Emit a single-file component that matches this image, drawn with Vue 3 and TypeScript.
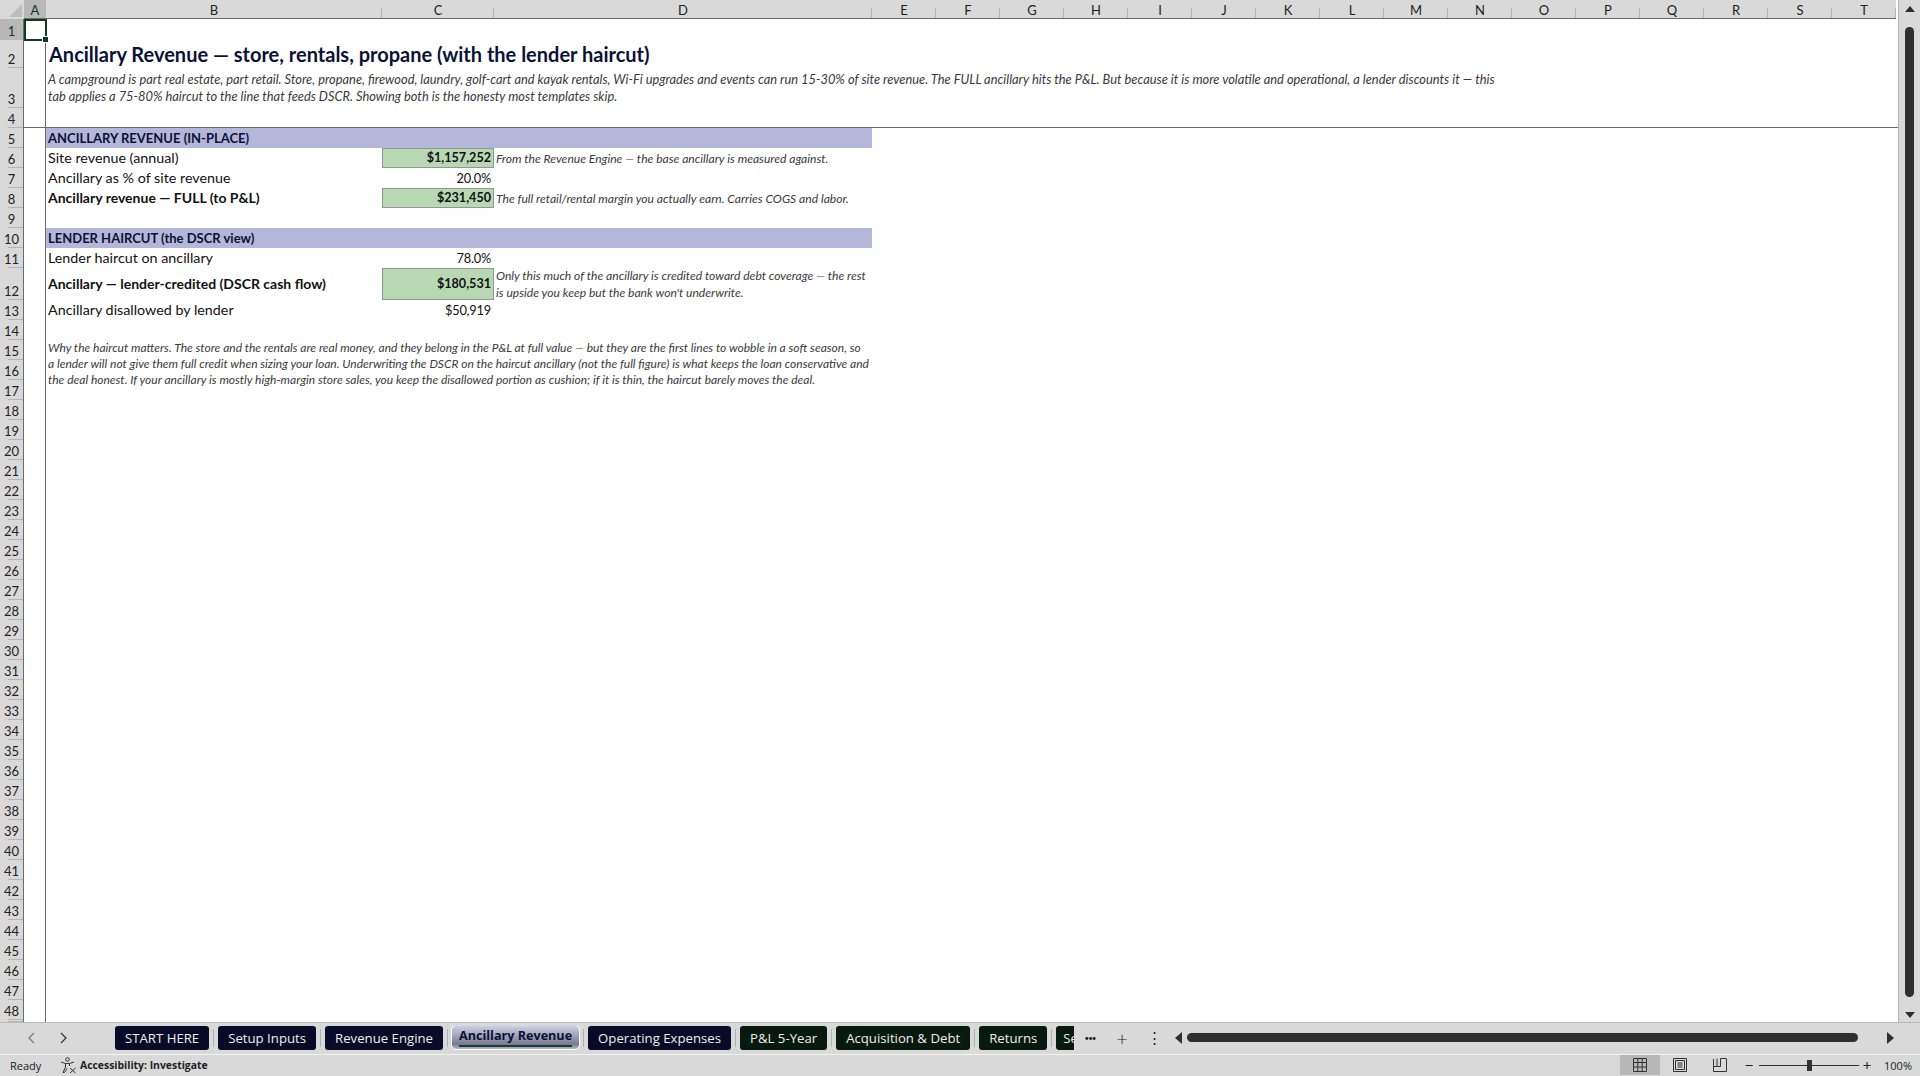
<template>
  <div class="app">
    <div class="main">
      <div class="sheet">
        <div class="corner">
          <svg width="14" height="14" viewBox="0 0 14 14"><polygon points="14,1 14,14 1,14" fill="#bdbdbd" /></svg>
        </div>
        <div
          v-for="(col, i) in columns"
          :key="col"
          class="col-head"
          :class="{ active: col === 'A' }"
          :style="{ gridColumn: i + 2 }"
        >{{ col }}</div>
        <div
          v-for="n in 48"
          :key="n"
          class="row-head"
          :class="{ active: n === 1 }"
          :style="{ gridRow: n + 1 }"
        >{{ n }}</div>
        <div class="row-head filler"></div>
        <div class="col-a-line"></div>
        <div class="freeze-line"></div>
        <div class="selected"><span class="handle"></span></div>

        <div class="title">Ancillary Revenue — store, rentals, propane (with the lender haircut)</div>
        <div class="subtitle">
          A campground is part real estate, part retail. Store, propane, firewood, laundry, golf-cart and kayak rentals, Wi-Fi upgrades and events can run 15-30% of site revenue. The FULL ancillary hits the P&amp;L. But because it is more volatile and operational, a lender discounts it — this<br />
          tab applies a 75-80% haircut to the line that feeds DSCR. Showing both is the honesty most templates skip.
        </div>

        <template v-for="line in lines" :key="line.row">
          <div v-if="line.section" class="section" :style="{ gridRow: line.row + 1 }">{{ line.section }}</div>
          <template v-else>
            <div class="label" :class="{ bold: line.bold }" :style="{ gridRow: line.row + 1 }">{{ line.label }}</div>
            <div class="value" :class="{ green: line.green }" :style="{ gridRow: line.row + 1 }">{{ line.value }}</div>
            <div v-if="line.note" class="note" :style="{ gridRow: line.row + 1 }" v-html="line.note"></div>
          </template>
        </template>

        <div class="why">
          Why the haircut matters. The store and the rentals are real money, and they belong in the P&amp;L at full value — but they are the first lines to wobble in a soft season, so<br />
          a lender will not give them full credit when sizing your loan. Underwriting the DSCR on the haircut ancillary (not the full figure) is what keeps the loan conservative and<br />
          the deal honest. If your ancillary is mostly high-margin store sales, you keep the disallowed portion as cushion; if it is thin, the haircut barely moves the deal.
        </div>
      </div>

      <div class="vscroll">
        <svg width="10" height="6" viewBox="0 0 10 6"><polygon points="5,0 10,6 0,6" fill="#2f2f2f" /></svg>
        <div class="vthumb"></div>
        <svg width="10" height="6" viewBox="0 0 10 6"><polygon points="0,0 10,0 5,6" fill="#2f2f2f" /></svg>
      </div>
    </div>

    <div class="tabbar">
      <div class="nav">
        <svg width="8" height="12" viewBox="0 0 8 12"><polyline points="7,1 2,6 7,11" fill="none" stroke="#7a7a7a" stroke-width="1.2" /></svg>
        <svg width="8" height="12" viewBox="0 0 8 12"><polyline points="1,1 6,6 1,11" fill="none" stroke="#333" stroke-width="1.2" /></svg>
      </div>
      <div class="tabs">
        <template v-for="(tab, i) in tabs" :key="tab.name">
          <span v-if="i > 0" class="sep"></span>
          <div class="tab" :class="tab.kind">{{ tab.name }}</div>
        </template>
      </div>
      <div class="more">•••</div>
      <div class="plus">+</div>
      <div class="dots">⋮</div>
      <div class="hscroll">
        <svg width="7" height="12" viewBox="0 0 7 12"><polygon points="7,0 7,12 0,6" fill="#2f2f2f" /></svg>
        <div class="hthumb"></div>
        <svg width="7" height="12" viewBox="0 0 7 12"><polygon points="0,0 7,6 0,12" fill="#2f2f2f" /></svg>
      </div>
    </div>

    <div class="status">
      <span class="ready">Ready</span>
      <svg class="a11y" width="17" height="17" viewBox="0 0 17 17" fill="none" stroke="#333" stroke-width="1">
        <circle cx="7.5" cy="2.5" r="1.8" />
        <path d="M1 5 L5.5 6.5 H9.5 L14 5 M5.5 6.5 V10 L3 15.5 H4.5 L7 11.5 M9.5 6.5 V9" />
        <path d="M10 11 L15.5 16 M15.5 11 L10 16" />
      </svg>
      <span class="a11y-text">Accessibility: Investigate</span>
      <div class="views">
        <div class="view on">
          <svg width="14" height="14" viewBox="0 0 14 14" fill="none" stroke="#333"><path d="M.5 .5H13.5V13.5H.5ZM.5 4.5H13.5M.5 9H13.5M4.8 .5V13.5M9.2 .5V13.5" /></svg>
        </div>
        <div class="view">
          <svg width="14" height="14" viewBox="0 0 14 14" fill="none" stroke="#333"><path d="M.5 .5H13.5V13.5H.5ZM2.5 2.5H11.5V11.5H2.5ZM4.5 5H9.5M4.5 7H9.5M4.5 9H9.5" /></svg>
        </div>
        <div class="view">
          <svg width="14" height="14" viewBox="0 0 14 14" fill="none" stroke="#333"><path d="M.5 1V13.5H13.5V1M.5 8.5H7.5V.5M7.5 .5H13.5M4 .5V8.5" /></svg>
        </div>
      </div>
      <div class="zoom">
        <span class="zoom-btn minus">−</span>
        <div class="slider"><span class="knob"></span></div>
        <span class="zoom-btn plus-btn">+</span>
      </div>
      <span class="pct">100%</span>
    </div>
  </div>
</template>

<script setup lang="ts">
interface SheetLine {
  row: number
  section?: string
  label?: string
  value?: string
  note?: string
  bold?: boolean
  green?: boolean
}

const columns = 'ABCDEFGHIJKLMNOPQRST'.split('')

const lines: SheetLine[] = [
  { row: 5, section: 'ANCILLARY REVENUE (IN-PLACE)' },
  {
    row: 6,
    label: 'Site revenue (annual)',
    value: '$1,157,252',
    green: true,
    note: 'From the Revenue Engine — the base ancillary is measured against.'
  },
  { row: 7, label: 'Ancillary as % of site revenue', value: '20.0%' },
  {
    row: 8,
    label: 'Ancillary revenue — FULL (to P&L)',
    value: '$231,450',
    bold: true,
    green: true,
    note: 'The full retail/rental margin you actually earn. Carries COGS and labor.'
  },
  { row: 10, section: 'LENDER HAIRCUT (the DSCR view)' },
  { row: 11, label: 'Lender haircut on ancillary', value: '78.0%' },
  {
    row: 12,
    label: 'Ancillary — lender-credited (DSCR cash flow)',
    value: '$180,531',
    bold: true,
    green: true,
    note: "Only this much of the ancillary is credited toward debt coverage — the rest<br>is upside you keep but the bank won't underwrite."
  },
  { row: 13, label: 'Ancillary disallowed by lender', value: '$50,919' }
]

const tabs = [
  { name: 'START HERE', kind: 'navy' },
  { name: 'Setup Inputs', kind: 'navy' },
  { name: 'Revenue Engine', kind: 'navy' },
  { name: 'Ancillary Revenue', kind: 'current' },
  { name: 'Operating Expenses', kind: 'navy' },
  { name: 'P&L 5-Year', kind: 'forest' },
  { name: 'Acquisition & Debt', kind: 'forest' },
  { name: 'Returns', kind: 'forest' },
  { name: 'Se', kind: 'forest cut' }
]
</script>

<style>
html,
body {
  margin: 0;
  background: #d9d9d9;
  overflow: hidden;
}
</style>

<style scoped>
.app {
  width: 1920px;
  height: 1076px;
  display: flex;
  flex-direction: column;
  background: #d9d9d9;
  font-family: Lato, "Open Sans", sans-serif;
  color: #111;
}

.main {
  display: flex;
  height: 1022px;
}

.sheet {
  width: 1898px;
  display: grid;
  grid-template-columns: 24px 22px 336px 112px 378px repeat(16, 64px) 2px;
  grid-template-rows: 19px 21px 28px 40px 20px repeat(7, 20px) 32px repeat(36, 20px) 2px;
  background: #fff;
  border-right: 1px solid #b5b5b5;
  overflow: hidden;
}

.corner {
  grid-row: 1;
  grid-column: 1;
  background: #d9d9d9;
  display: flex;
  align-items: flex-end;
  justify-content: flex-end;
  padding: 0 2px 2px 0;
  box-sizing: border-box;
}

.col-head {
  grid-row: 1;
  background: #d9d9d9 linear-gradient(#b5b5b5, #b5b5b5) right bottom / 1px 10px no-repeat;
  border-bottom: 1px solid #6b6b6b;
  box-sizing: border-box;
  text-align: center;
  font-size: 13px;
  line-height: 20px;
  color: #222;
}

.col-head.active {
  background: #b8b8b8;
  color: #0f3d20;
}

.row-head {
  grid-column: 1;
  background: #d9d9d9 linear-gradient(#b5b5b5, #b5b5b5) right bottom / 15px 1px no-repeat;
  border-right: 1px solid #6b6b6b;
  box-sizing: border-box;
  display: flex;
  align-items: flex-end;
  justify-content: center;
  font-size: 13px;
  line-height: 18px;
  color: #222;
}

.row-head.active {
  background: #b8b8b8;
  color: #0f3d20;
}

.row-head.filler {
  grid-row: 50;
}

.col-a-line {
  grid-row: 2 / -1;
  grid-column: 2;
  border-right: 1px solid #6b6b6b;
}

.freeze-line {
  grid-row: 5;
  grid-column: 2 / -1;
  border-bottom: 1px solid #6b6b6b;
}

.selected {
  grid-row: 2;
  grid-column: 2;
  position: relative;
  border: 2px solid #0f3d20;
  margin: 0 -1px -1px 0;
}

.handle {
  position: absolute;
  right: -4px;
  bottom: -4px;
  width: 5px;
  height: 5px;
  background: #0f3d20;
  border: 1px solid #fff;
}

.title {
  grid-row: 3;
  grid-column: 3 / -1;
  align-self: center;
  padding-left: 3px;
  font-size: 20px;
  font-weight: 700;
  color: #0b1136;
  white-space: nowrap;
}

.subtitle {
  grid-row: 4;
  grid-column: 3 / -1;
  padding: 3px 0 0 2px;
  font-size: 12.85px;
  font-style: italic;
  line-height: 17px;
  color: #3a3a3a;
  white-space: nowrap;
}

.section {
  grid-column: 3 / 6;
  background: #b4b7d9;
  padding-left: 2px;
  font-size: 13px;
  font-weight: 700;
  line-height: 20px;
  color: #0b1136;
}

.label {
  grid-column: 3;
  align-self: center;
  padding: 0 0 1px 2px;
  font-size: 14.3px;
  white-space: nowrap;
}

.value {
  grid-column: 4;
  display: flex;
  align-items: center;
  justify-content: flex-end;
  padding: 0 3px 1px 0;
  box-sizing: border-box;
  font-size: 12.8px;
  letter-spacing: -0.2px;
}

.label.bold {
  font-size: 14px;
  font-weight: 700;
}

.value.green {
  background: #b8d8b4;
  border: 1px solid #8e9a8e;
  padding-right: 2px;
  font-size: 12.6px;
  font-weight: 700;
  letter-spacing: 0;
}

.note {
  grid-column: 5;
  align-self: center;
  padding-left: 2px;
  font-size: 12.1px;
  font-style: italic;
  line-height: 17px;
  color: #3a3a3a;
  white-space: nowrap;
}

.why {
  grid-row: 16 / 19;
  grid-column: 3 / 6;
  padding-left: 2px;
  font-size: 12px;
  font-style: italic;
  line-height: 16px;
  color: #3a3a3a;
  white-space: nowrap;
}

.vscroll {
  flex: 1;
  display: flex;
  flex-direction: column;
  align-items: center;
  justify-content: space-between;
  padding: 6px 0 4px;
}

.vthumb {
  width: 9px;
  height: 970px;
  background: #2f2f2f;
  border-radius: 5px;
}

.tabbar {
  height: 32px;
  display: flex;
  align-items: center;
  box-sizing: border-box;
  border-top: 1px solid #b9b9b9;
  padding-bottom: 2px;
}

.nav {
  width: 115px;
  display: flex;
  gap: 25px;
  padding-left: 27px;
  box-sizing: border-box;
}

.tabs {
  display: flex;
  align-items: center;
  gap: 4px;
  width: 959px;
  overflow: hidden;
}

.sep {
  flex: none;
  width: 1px;
  height: 18px;
  background: #b0b0b0;
}

.tab {
  height: 24px;
  padding: 0 10px;
  border-radius: 3px;
  flex: none;
  font-family: "Open Sans", sans-serif;
  font-size: 13.2px;
  line-height: 24px;
  color: #eee;
}

.tab.navy {
  background: #070b28;
}

.tab.forest {
  background: #08190d;
}

.tab.cut {
  padding: 0 10px 0 7px;
}

.tab.current {
  height: 23px;
  padding: 0 7px;
  background:
    linear-gradient(#15422a, #15422a) center bottom 2px / calc(100% - 14px) 2px no-repeat,
    linear-gradient(#cdd0e4, #777a92 80%, #b9bbcb);
  border-radius: 4px;
  outline: 1px solid #fff;
  font-size: 12.6px;
  font-weight: 700;
  line-height: 19px;
  color: #0b1136;
}

.more {
  width: 32px;
  text-align: center;
  font-size: 8px;
  letter-spacing: -1px;
  color: #222;
}

.plus {
  width: 32px;
  text-align: center;
  font-size: 20px;
  font-weight: 300;
  color: #222;
}

.dots {
  width: 32px;
  text-align: center;
  font-size: 15px;
  color: #222;
}

.hscroll {
  flex: 1;
  display: flex;
  align-items: center;
  gap: 5px;
  padding-left: 5px;
}

.hthumb {
  width: 671px;
  height: 9px;
  background: #2f2f2f;
  border-radius: 5px;
  margin-right: 24px;
}

.status {
  height: 22px;
  display: flex;
  align-items: center;
  box-sizing: border-box;
  border-top: 1px solid #f2f2f2;
  padding-bottom: 1px;
  font-family: "Open Sans", sans-serif;
  font-size: 11px;
  color: #222;
}

.ready {
  margin-left: 10px;
  width: 50px;
}

.a11y {
  margin-right: 3px;
}

.a11y-text {
  font-size: 10.4px;
  font-weight: 700;
}

.views {
  margin-left: auto;
  display: flex;
  height: 100%;
}

.view {
  width: 40px;
  display: flex;
  align-items: center;
  justify-content: center;
}

.view.on {
  background: #b8b8b8;
}

.zoom {
  display: flex;
  align-items: center;
  margin-left: -1px;
}

.zoom-btn {
  text-align: center;
  font-size: 15px;
}

.minus {
  width: 20px;
}

.plus-btn {
  width: 16px;
}

.slider {
  width: 100px;
  height: 1px;
  background: #333;
  display: flex;
  align-items: center;
  justify-content: center;
}

.knob {
  flex: none;
  width: 5px;
  height: 11px;
  background: #333;
}

.pct {
  width: 45px;
  text-align: right;
  padding-right: 8px;
  box-sizing: border-box;
}
</style>
